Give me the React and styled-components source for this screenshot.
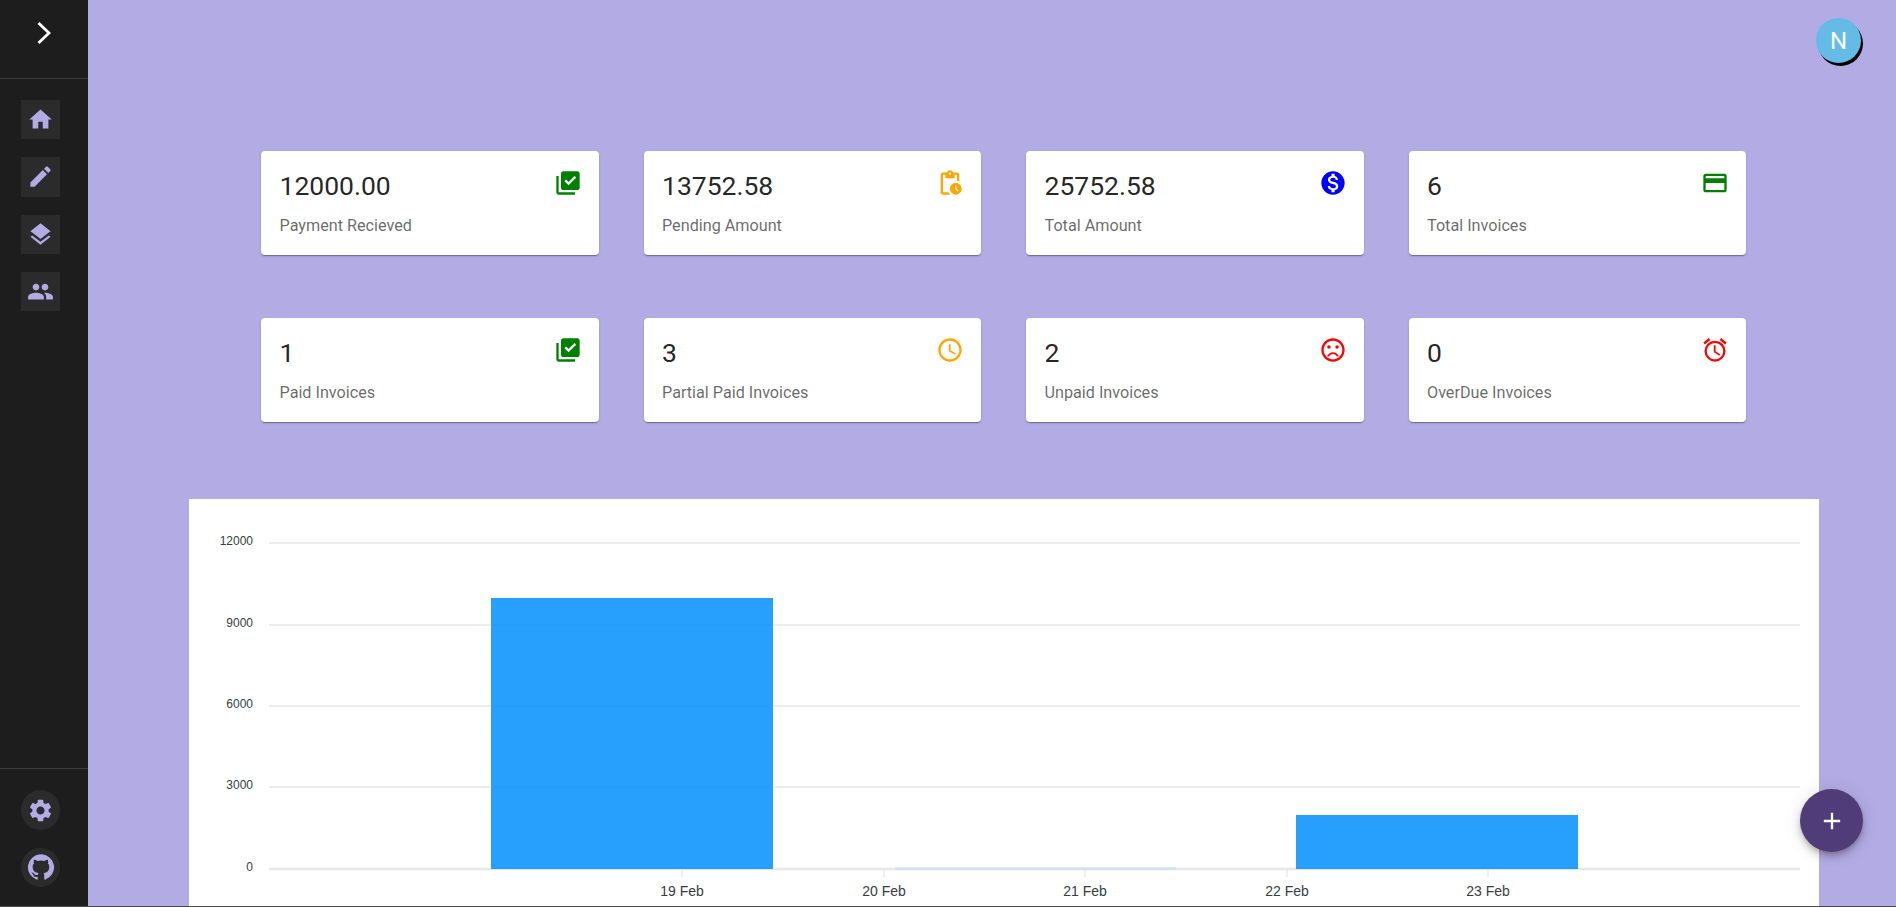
import styled, { createGlobalStyle } from "styled-components";
import {
  MdHome,
  MdEdit,
  MdLayers,
  MdPeople,
  MdSettings,
  MdLibraryAddCheck,
  MdOutlinePendingActions,
  MdMonetizationOn,
  MdOutlineCreditCard,
  MdOutlineAccessTime,
  MdOutlineSentimentDissatisfied,
  MdOutlineAlarm,
  MdAdd,
} from "react-icons/md";

const stats = [
  { value: "12000.00", label: "Payment Recieved", Icon: MdLibraryAddCheck, color: "green" },
  { value: "13752.58", label: "Pending Amount", Icon: MdOutlinePendingActions, color: "orange" },
  { value: "25752.58", label: "Total Amount", Icon: MdMonetizationOn, color: "blue" },
  { value: "6", label: "Total Invoices", Icon: MdOutlineCreditCard, color: "green" },
  { value: "1", label: "Paid Invoices", Icon: MdLibraryAddCheck, color: "green" },
  { value: "3", label: "Partial Paid Invoices", Icon: MdOutlineAccessTime, color: "orange" },
  { value: "2", label: "Unpaid Invoices", Icon: MdOutlineSentimentDissatisfied, color: "red" },
  { value: "0", label: "OverDue Invoices", Icon: MdOutlineAlarm, color: "red" },
];

const gridLines = [
  { y: 44, label: "12000" },
  { y: 126, label: "9000" },
  { y: 207, label: "6000" },
  { y: 288, label: "3000" },
  { y: 370, label: "0", base: true },
];

const ticks = [
  { x: 493, label: "19 Feb" },
  { x: 695, label: "20 Feb" },
  { x: 896, label: "21 Feb" },
  { x: 1098, label: "22 Feb" },
  { x: 1299, label: "23 Feb" },
];

function GithubIcon() {
  return (
    <svg width="26" height="26" viewBox="0 0 24 24" fill="currentColor">
      <path d="M12 .3a12 12 0 0 0-3.8 23.4c.6.1.8-.3.8-.6v-2c-3.3.7-4-1.6-4-1.6-.6-1.4-1.4-1.8-1.4-1.8-1-.7.1-.7.1-.7 1.2 0 1.9 1.2 1.9 1.2 1 1.8 2.8 1.3 3.5 1 0-.8.4-1.3.7-1.6-2.7-.3-5.5-1.3-5.5-6 0-1.2.5-2.3 1.3-3.1-.2-.4-.6-1.6 0-3.2 0 0 1-.3 3.4 1.2a11.5 11.5 0 0 1 6 0c2.3-1.5 3.3-1.2 3.3-1.2.6 1.6.2 2.8 0 3.2.9.8 1.3 1.9 1.3 3.2 0 4.6-2.8 5.6-5.5 5.9.5.4.9 1 .9 2.2v3.3c0 .3.1.7.8.6A12 12 0 0 0 12 .3" />
    </svg>
  );
}

export default function App() {
  return (
    <>
      <GlobalStyle />
      <Page>
        <Sidebar>
          <SideHeader>
            <svg width="14" height="22" viewBox="0 0 14 22" fill="none" stroke="#fff" strokeWidth="2.8">
              <path d="M1.5 1 L12 11 L1.5 21" />
            </svg>
          </SideHeader>
          <SideNav>
            <SideButton><MdHome size={27} /></SideButton>
            <SideButton><MdEdit size={27} /></SideButton>
            <SideButton><MdLayers size={27} /></SideButton>
            <SideButton><MdPeople size={27} /></SideButton>
          </SideNav>
          <SideFooter>
            <SideButton $round><MdSettings size={27} /></SideButton>
            <SideButton $round><GithubIcon /></SideButton>
          </SideFooter>
        </Sidebar>
        <Main>
          <Avatar>N</Avatar>
          <Cards>
            {stats.map(({ value, label, Icon, color }) => (
              <Card key={label}>
                <CardText>
                  <Value>{value}</Value>
                  <Label>{label}</Label>
                </CardText>
                <CardIcon $color={color}><Icon size={28} /></CardIcon>
              </Card>
            ))}
          </Cards>
          <ChartPanel>
            <svg width="1630" height="440" viewBox="0 0 1630 440">
              {gridLines.map((g) => (
                <g key={g.label}>
                  <line x1="80" x2="1611" y1={g.y} y2={g.y} stroke="#e7e7e7" strokeWidth={g.base ? 2.5 : 1.5} />
                  <text x="64" y={g.y + 2} textAnchor="end" fontSize="12" fill="#373d3f">{g.label}</text>
                </g>
              ))}
              <rect x="302" y="99" width="282" height="271" fill="#008ffb" fillOpacity="0.85" />
              <rect x="706" y="368.5" width="281" height="2.5" fill="#cfe1f2" />
              <rect x="1107" y="316" width="282" height="54" fill="#008ffb" fillOpacity="0.85" />
              {ticks.map((t) => (
                <g key={t.label}>
                  <line x1={t.x} x2={t.x} y1="371" y2="378" stroke="#e0e0e0" />
                  <text x={t.x} y="397" textAnchor="middle" fontSize="14" fill="#373d3f">{t.label}</text>
                </g>
              ))}
            </svg>
          </ChartPanel>
        </Main>
        <Fab><MdAdd size={28} /></Fab>
      </Page>
    </>
  );
}

const GlobalStyle = createGlobalStyle`
  html, body {
    margin: 0;
    padding: 0;
    height: 100%;
    overflow: hidden;
  }
  body {
    font-family: Roboto, sans-serif;
    background: #b3abe4;
  }
`;

const Page = styled.div`
  display: flex;
  height: 100vh;
  box-sizing: border-box;
  overflow: hidden;
  border-bottom: 1px solid #4a4a4a;
`;

const Sidebar = styled.aside`
  width: 88px;
  flex-shrink: 0;
  display: flex;
  flex-direction: column;
  background: #1d1d1d;
`;

const SideHeader = styled.div`
  height: 79px;
  display: flex;
  align-items: center;
  justify-content: center;
  padding-bottom: 13px;
  box-sizing: border-box;
  border-bottom: 1px solid #3a3a3a;
`;

const SideNav = styled.nav`
  flex: 1;
  display: flex;
  flex-direction: column;
  gap: 18px;
  padding: 21px 0 0 21px;
`;

const SideFooter = styled.div`
  display: flex;
  flex-direction: column;
  gap: 18px;
  padding: 21px 0 19px 21px;
  border-top: 1px solid #3a3a3a;
`;

const SideButton = styled.button`
  width: 39px;
  height: 39.3px;
  padding: 0;
  border: none;
  display: flex;
  align-items: center;
  justify-content: center;
  color: #b3abe4;
  background: #2b2b2b;
  border-radius: ${(p) => (p.$round ? "50%" : "0")};
`;

const Main = styled.main`
  flex: 1;
  min-width: 0;
  box-sizing: border-box;
  padding: 151px 77px 0 101px;
  position: relative;
`;

const Avatar = styled.div`
  position: absolute;
  top: 18px;
  right: 35px;
  width: 45px;
  height: 45px;
  border-radius: 50%;
  display: flex;
  align-items: center;
  justify-content: center;
  color: #fff;
  font-size: 24px;
  background: #63bbe6;
  box-shadow: 2px 3px 0 #000;
`;

const Cards = styled.section`
  display: grid;
  grid-template-columns: repeat(4, 1fr);
  column-gap: 45px;
  row-gap: 63px;
  padding: 0 73px 0 72px;
`;

const Card = styled.article`
  height: 104px;
  box-sizing: border-box;
  display: flex;
  justify-content: space-between;
  align-items: flex-start;
  padding: 17px 17px 0 18.5px;
  background: #fff;
  border-radius: 4px;
  box-shadow: 0 2px 1px -1px rgba(0, 0, 0, 0.2), 0 1px 1px 0 rgba(0, 0, 0, 0.14), 0 1px 3px 0 rgba(0, 0, 0, 0.12);
`;

const CardText = styled.div`
  display: flex;
  flex-direction: column;
`;

const Value = styled.div`
  font-size: 26.5px;
  line-height: 36px;
  color: rgba(0, 0, 0, 0.87);
`;

const Label = styled.div`
  margin-top: 10px;
  font-size: 16.2px;
  line-height: 24px;
  color: rgba(0, 0, 0, 0.6);
`;

const CardIcon = styled.div`
  display: flex;
  margin-top: 1px;
  color: ${(p) => p.$color};
`;

const ChartPanel = styled.section`
  margin-top: 77px;
  background: #fff;
  font-family: "Liberation Sans", Arial, sans-serif;
  svg {
    display: block;
  }
`;

const Fab = styled.button`
  position: fixed;
  left: 1800px;
  top: 789px;
  width: 63px;
  height: 63px;
  padding: 0;
  border: none;
  border-radius: 50%;
  display: flex;
  align-items: center;
  justify-content: center;
  color: #fff;
  background: #4f3c78;
  box-shadow: 0 3px 5px -1px rgba(0, 0, 0, 0.2), 0 6px 10px 0 rgba(0, 0, 0, 0.14), 0 1px 18px 0 rgba(0, 0, 0, 0.12);
`;
